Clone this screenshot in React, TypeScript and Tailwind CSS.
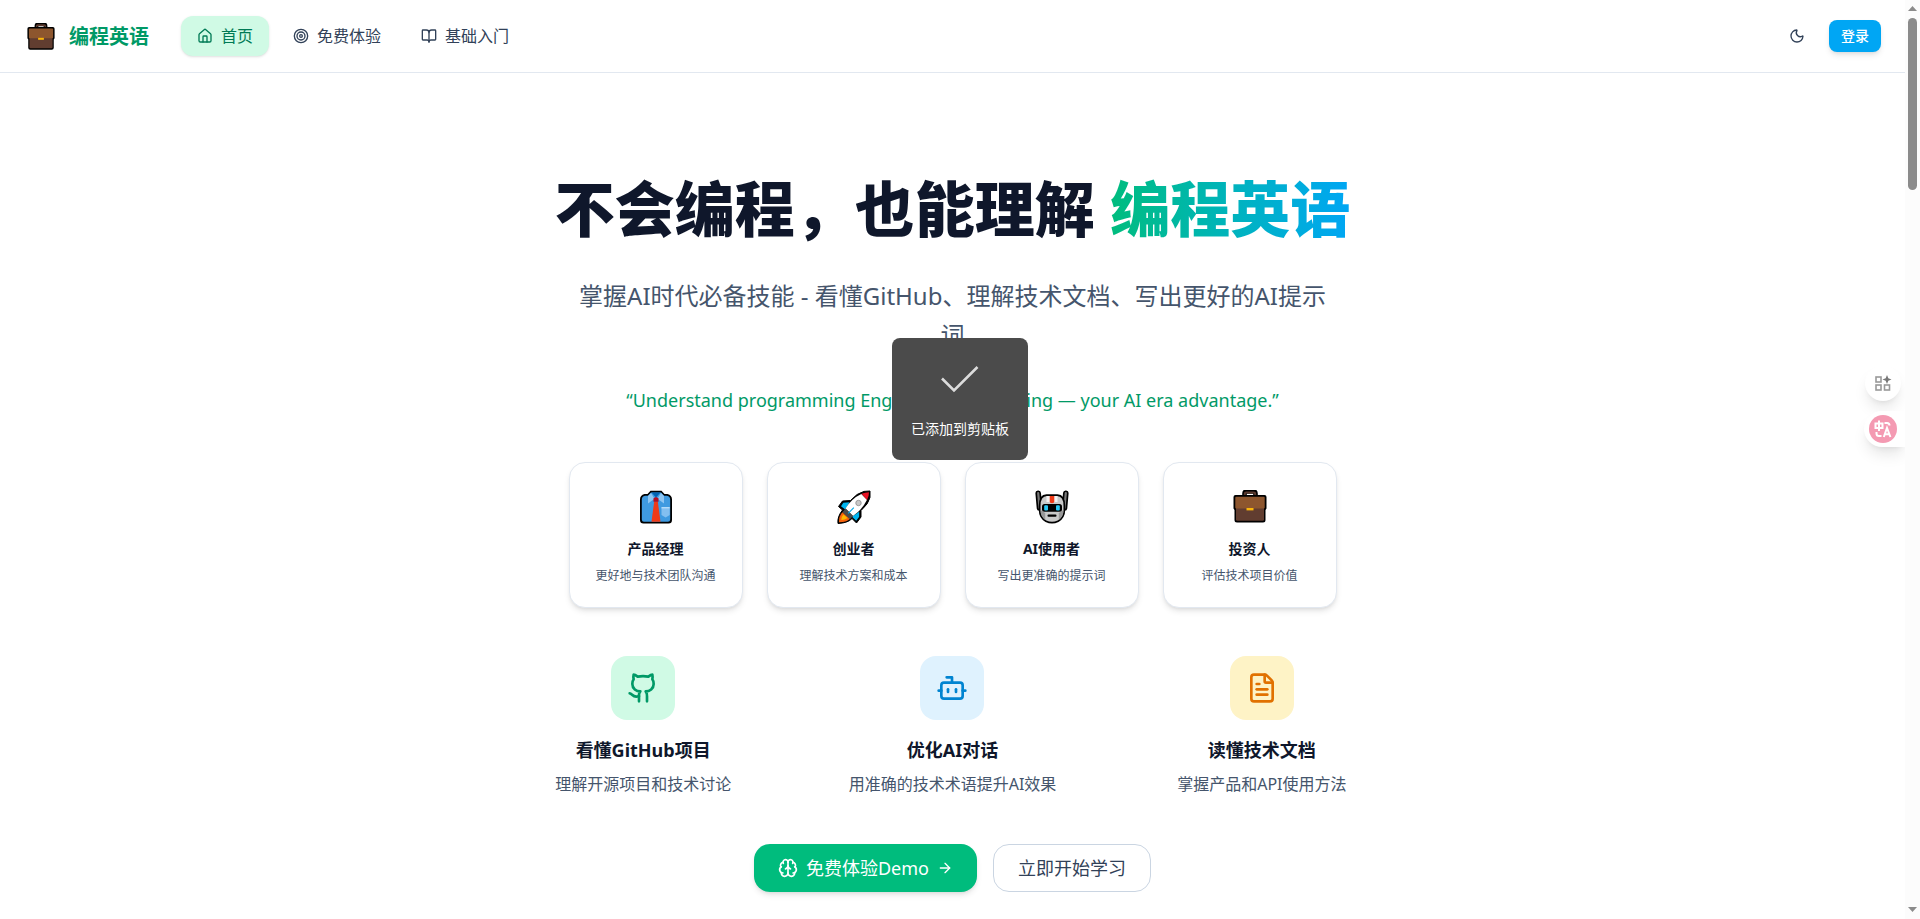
import React from "react";
import { ArrowRight, BookOpen, Bot, Brain, FileText, Github, House, Moon, Target } from "lucide-react";

type IconProps = { className?: string };

function Briefcase({ className }: IconProps) {
  return (
    <svg viewBox="0 0 34 34" className={className} aria-hidden="true">
      <path d="M11.5 6V3.6Q11.500 1.500 13.600 1.500H20.400Q22.500 1.500 22.500 3.600V6" fill="none" stroke="#000" strokeWidth="4.600" />
      <path d="M11.800 6V3.700Q11.800 2.500 13.200 2.500H20.800Q22.200 2.500 22.200 3.700V6" fill="none" stroke="#5b3a2e" strokeWidth="2" />
      <path d="M2.500 5h29Q33.500 5 33.500 7v11.500l-1 1.500v10q0 2.500-2.500 2.500H4Q1.500 32.500 1.500 30V20l-1-1.500V7Q.5 5 2.500 5z" fill="#000" />
      <path d="M3 18h28v11.500q0 1.300-1.300 1.300H4.300Q3 30.800 3 29.500z" fill="#613d30" />
      <path d="M3.300 6.800h27.400q1 0 1 1v9.700q0 1-1 1H3.300q-1 0-1-1V7.800q0-1 1-1z" fill="#8d562e" />
      <rect x="13.500" y="18" width="7" height="2.400" fill="#f9b50b" />
    </svg>
  );
}

function Shirt({ className }: IconProps) {
  return (
    <svg viewBox="0 0 34 34" className={className} aria-hidden="true">
      <path d="M11.500.800h11L25.500 4h3Q33 5 33 9.500V30q0 3.500-3.500 3.500h-25Q1 33.500 1 30V9.500Q1 5 5.500 4h3z" fill="#000" />
      <path d="M12 2.500h10l3 3.300h3q3.200.7 3.200 4V29.500q0 2.200-2.200 2.200H5q-2.200 0-2.200-2.200V9.800q0-3.300 3.200-4h3z" fill="#3f9ae0" />
      <path d="M12.500 2.500h9L17 7.500z" fill="#0062b3" />
      <path d="M12 3L9 6v7.500l6.500-4.700zM22 3l3 3v7.500l-6.500-4.700z" fill="#8ec5f2" />
      <path d="M15.200 11.500h3.600l2.700 20.200h-9z" fill="#f03a17" />
      <path d="M14.500 8.200L17 7l2.500 1.200v3.600h-5z" fill="#b50d22" />
      <path d="M22.500 17.500h8.200v7.500l-4.100 2.500-4.100-2.500z" fill="#83bff0" />
      <path d="M22.500 17h8.200v1.400h-8.200z" fill="#b4dcfa" />
    </svg>
  );
}

function Rocket({ className }: IconProps) {
  return (
    <svg viewBox="0 0 34 34" className={className} aria-hidden="true">
      <path d="M33 1v6.500Q31.500 14 24 20.500V27l-4.500 6-4.500-4.500Q11 33 1 33.500 0 27 5.500 20L1.500 16.500l4-5.500 8-.5Q20 3 27 1.400z" fill="#000" stroke="#000" strokeLinejoin="round" />
      <path d="M12.500 12.200L6.300 12.800 4 16.300l4.200 3.200zM22.200 21.800v5l-3 4-4.200-4z" fill="#00b4ee" />
      <path d="M8.500 18.500Q14.500 8.500 24.300 4L30 9.800Q25.500 19.500 16 26z" fill="#fff" />
      <path d="M24.500 3.800Q28 2.300 32 2.200 32 6.500 30 10z" fill="#e81224" />
      <path d="M8.500 18.500L5.300 22.300l7.400 7.200 3.300-3.500z" fill="#4c4c4c" />
      <path d="M5.300 22.300Q1.500 26.500 2 32.300 9 32.500 12.700 29z" fill="#f7630c" />
      <path d="M6.500 24.500Q4 27 4.300 30 8 29.800 10.500 28z" fill="#fdb900" />
      <circle cx="21.500" cy="13" r="2.700" fill="#c8c8c8" stroke="#9b9b9b" />
      <path d="M11.200 23.300l5.600-5.600" stroke="#00a8e8" strokeWidth="1.100" />
    </svg>
  );
}

function RobotFace({ className }: IconProps) {
  return (
    <svg viewBox="0 0 34 34" className={className} aria-hidden="true">
      <path d="M3.200 3.200L4.500 18M30.800 3.200L29.500 18" stroke="#000" strokeWidth="5.600" strokeLinecap="round" />
      <path d="M3.200 3.200L4.500 18M30.800 3.200L29.500 18" stroke="#777" strokeWidth="2.200" strokeLinecap="round" />
      <path d="M3.800 16Q3.800 4.200 11.500 4.200H22.500Q30.200 4.200 30.200 16v4Q30.200 28 23.500 32q-6.500 3-13 0Q3.800 28 3.800 20z" fill="#000" />
      <path d="M5.500 16Q5.500 6 12 6H22Q28.500 6 28.500 16v4Q28.500 27 22.700 30.500q-5.700 2.400-11.400 0Q5.500 27 5.500 20z" fill="#c9c9c9" />
      <path d="M5.500 20l4.700 3v6.800Q5.500 26.500 5.500 20zM28.500 20l-4.700 3v6.800Q28.500 26.500 28.500 20z" fill="#989898" />
      <path d="M11.500 6h11v6h-11z" fill="#f3f3f3" />
      <path d="M14.700 6h4.600v5.500q0 1.800-2.300 1.800t-2.300-1.800z" fill="#f03a17" />
      <rect x="7" y="14" width="20" height="7.800" rx="2.500" fill="#000" />
      <rect x="9.200" y="15.200" width="3.800" height="5.400" rx="1" fill="#27c8f5" />
      <rect x="21" y="15.200" width="3.800" height="5.400" rx="1" fill="#27c8f5" />
      <rect x="12.500" y="24.500" width="9" height="2.300" rx="1" fill="#000" />
    </svg>
  );
}

const navItems = [
  { label: "首页", icon: House, active: true },
  { label: "免费体验", icon: Target, active: false },
  { label: "基础入门", icon: BookOpen, active: false },
];

const audiences = [
  { title: "产品经理", text: "更好地与技术团队沟通", icon: Shirt },
  { title: "创业者", text: "理解技术方案和成本", icon: Rocket },
  { title: "AI使用者", text: "写出更准确的提示词", icon: RobotFace },
  { title: "投资人", text: "评估技术项目价值", icon: Briefcase },
];

const features = [
  { title: "看懂GitHub项目", text: "理解开源项目和技术讨论", icon: Github, tile: "bg-emerald-100 text-emerald-600" },
  { title: "优化AI对话", text: "用准确的技术术语提升AI效果", icon: Bot, tile: "bg-sky-100 text-sky-600" },
  { title: "读懂技术文档", text: "掌握产品和API使用方法", icon: FileText, tile: "bg-amber-100 text-amber-600" },
];

function Header() {
  return (
    <header className="flex items-center justify-between border-b border-slate-200 bg-white px-6 py-4">
      <div className="flex items-center gap-8">
        <a href="#home" className="flex items-center gap-3 pt-0.5">
          <span className="flex w-[33px] justify-center">
            <Briefcase className="size-7" />
          </span>
          <span className="text-xl font-bold text-emerald-600">编程英语</span>
        </a>
        <nav className="flex gap-2">
          {navItems.map(({ label, icon: Icon, active }) => (
            <a
              key={label}
              href="#nav"
              className={
                active
                  ? "flex h-10 items-center gap-2 rounded-xl bg-emerald-100 px-4 text-emerald-700 shadow-sm"
                  : "flex h-10 items-center gap-2 rounded-xl px-4 text-slate-700"
              }
            >
              <Icon className="size-4" />
              {label}
            </a>
          ))}
        </nav>
      </div>
      <div className="flex items-center gap-4">
        <button aria-label="切换主题" className="flex size-8 items-center justify-center text-slate-700">
          <Moon className="size-4" />
        </button>
        <button className="h-8 rounded-lg bg-sky-500 px-3 text-sm font-medium text-white shadow-md">登录</button>
      </div>
    </header>
  );
}

function Hero() {
  return (
    <main className="flex flex-col items-center px-6 pt-24 text-center">
      <h1 className="mb-[27px] text-6xl leading-[80px] font-black text-slate-900">
        不会编程，也能理解{" "}
        <span className="bg-linear-to-r from-emerald-500 to-sky-500 bg-clip-text text-transparent">编程英语</span>
      </h1>
      <p className="mb-8 max-w-3xl text-2xl leading-relaxed text-slate-600">
        掌握AI时代必备技能 - 看懂GitHub、理解技术文档、写出更好的AI提示词
      </p>
      <p className="mb-12 text-lg text-emerald-600">
        “Understand programming English without coding — your AI era advantage.”
      </p>

      <div className="mb-12 grid w-full max-w-3xl grid-cols-4 gap-6">
        {audiences.map(({ title, text, icon: Icon }) => (
          <article key={title} className="flex flex-col items-center rounded-2xl border border-slate-200 bg-white pt-6 pb-[22px] shadow-md">
            <Icon className="mb-3 size-10 p-[3px]" />
            <h3 className="mb-2 text-sm font-bold text-slate-900">{title}</h3>
            <p className="text-xs leading-[18px] text-slate-600">{text}</p>
          </article>
        ))}
      </div>

      <div className="mb-12 grid w-full max-w-4xl grid-cols-3 gap-8">
        {features.map(({ title, text, icon: Icon, tile }) => (
          <article key={title} className="flex flex-col items-center">
            <div className={`mb-4 flex size-16 items-center justify-center rounded-2xl ${tile}`}>
              <Icon className="size-8" />
            </div>
            <h3 className="mb-2 text-lg font-bold text-slate-900">{title}</h3>
            <p className="text-slate-600">{text}</p>
          </article>
        ))}
      </div>

      <div className="flex gap-4 text-lg">
        <button className="flex h-12 items-center gap-2 rounded-2xl bg-emerald-500 px-6 text-white shadow-md">
          <Brain className="size-5" />
          免费体验Demo
          <ArrowRight className="size-4" />
        </button>
        <button className="h-12 rounded-2xl border border-slate-300 bg-white px-6 text-slate-700">立即开始学习</button>
      </div>
    </main>
  );
}

function SideTools() {
  return (
    <div className="absolute top-[365px] right-0 flex flex-col items-end gap-[10px]">
      <button aria-label="工具" className="mr-1 flex size-9 items-center justify-center rounded-full bg-white shadow-lg">
        <svg viewBox="0 0 18 18" className="size-[18px]" fill="none" stroke="#999" strokeWidth="1.600" aria-hidden="true">
          <rect x="2" y="3" width="5" height="5" />
          <rect x="2" y="11" width="5" height="5" />
          <rect x="10.500" y="11" width="5" height="5" />
          <path d="M13 1l1.300 3.200L17.500 5.500l-3.200 1.300L13 10l-1.300-3.200L8.500 5.500l3.200-1.300z" fill="#777" stroke="none" />
        </svg>
      </button>
      <button aria-label="翻译" className="flex h-9 w-[41px] items-center rounded-l-full bg-white pl-[5px] shadow-lg">
        <svg viewBox="0 0 28 28" className="size-7" fill="none" stroke="#fff" strokeWidth="2" aria-hidden="true">
          <circle cx="14" cy="14" r="14" fill="#f49ab2" stroke="none" />
          <path d="M6.500 8.500h7v4.500h-7zM10 5.500v10.500" />
          <path d="M15.500 8h2.500q2.500 0 2.500 2.500M7.500 17v1.500q0 2.500 2.500 2.500h2.500" />
          <path d="M14.800 22l3.200-9 3.400 9M16 19.200h4.200" />
        </svg>
      </button>
    </div>
  );
}

function Toast() {
  return (
    <div
      role="status"
      className="fixed top-[338px] left-1/2 flex h-[122px] w-[136px] -translate-x-1/2 flex-col items-center rounded-lg bg-[#4b4b4b] pt-6"
    >
      <svg viewBox="0 0 40 34" className="mb-5 h-[34px] w-10" fill="none" stroke="#dcdcdc" strokeWidth="2.600" aria-hidden="true">
        <path d="M2 16.500L14 28.500 37.500 5" />
      </svg>
      <span className="text-sm leading-[26px] text-white">已添加到剪贴板</span>
    </div>
  );
}

function ScrollRail() {
  return (
    <div aria-hidden="true" className="flex w-[15px] shrink-0 flex-col items-center justify-between bg-[#fcfcfc] pt-[6px] pb-[7px]">
      <div className="flex flex-col items-center gap-[7px]">
        <svg viewBox="0 0 9 5" className="h-[5px] w-[9px]" fill="#8b8b8b">
          <path d="M4.500 0L9 5H0z" />
        </svg>
        <div className="h-[172px] w-[9px] rounded-full bg-[#8b8b8b]" />
      </div>
      <svg viewBox="0 0 9 5" className="h-[5px] w-[9px]" fill="#8b8b8b">
        <path d="M0 0h9L4.500 5z" />
      </svg>
    </div>
  );
}

export default function App() {
  return (
    <div className="flex h-screen overflow-hidden bg-white font-['Noto_Sans','Noto_Sans_CJK_SC',sans-serif]">
      <div className="relative min-w-0 flex-1 overflow-hidden">
        <Header />
        <Hero />
        <SideTools />
      </div>
      <ScrollRail />
      <Toast />
    </div>
  );
}
